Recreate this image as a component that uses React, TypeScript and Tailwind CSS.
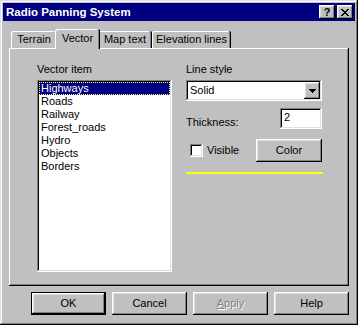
import React from "react";

const raised =
  "shadow-[inset_-1px_-1px_#000,inset_1px_1px_#fff,inset_-2px_-2px_#808080,inset_2px_2px_#dfdfdf]";
const sunken =
  "shadow-[inset_-1px_-1px_#fff,inset_1px_1px_#808080,inset_-2px_-2px_#dfdfdf,inset_2px_2px_#000]";

const items = ["Highways", "Roads", "Railway", "Forest_roads", "Hydro", "Objects", "Borders"];

const tabs = [
  { label: "Terrain", w: "w-[46px]" },
  { label: "Vector", w: "w-[45px]", active: true },
  { label: "Map text", w: "w-[54px]" },
  { label: "Elevation lines", w: "w-[79px]" },
];

function CloseGlyph() {
  return (
    <svg width="8" height="7" viewBox="0 0 8 7" shapeRendering="crispEdges">
      <rect x="0" y="0" width="2" height="1" />
      <rect x="6" y="0" width="2" height="1" />
      <rect x="1" y="1" width="2" height="1" />
      <rect x="5" y="1" width="2" height="1" />
      <rect x="2" y="2" width="4" height="1" />
      <rect x="3" y="3" width="2" height="1" />
      <rect x="2" y="4" width="4" height="1" />
      <rect x="1" y="5" width="2" height="1" />
      <rect x="5" y="5" width="2" height="1" />
      <rect x="0" y="6" width="2" height="1" />
      <rect x="6" y="6" width="2" height="1" />
    </svg>
  );
}

function DownArrow() {
  return (
    <svg width="7" height="4" viewBox="0 0 7 4" shapeRendering="crispEdges">
      <rect x="0" y="0" width="7" height="1" />
      <rect x="1" y="1" width="5" height="1" />
      <rect x="2" y="2" width="3" height="1" />
      <rect x="3" y="3" width="1" height="1" />
    </svg>
  );
}

function Button({ children, isDefault }: { children: React.ReactNode; isDefault?: boolean }) {
  return (
    <div
      className={`w-[75px] h-[23px] flex items-center justify-center bg-[#c0c0c0] ${raised} ${
        isDefault ? "border border-black" : ""
      }`}
    >
      {children}
    </div>
  );
}

export default function App() {
  return (
    <div
      className={`w-[358px] h-[325px] bg-[#c0c0c0] p-[3px] flex flex-col text-black text-[11px] leading-[13px] font-['Liberation_Sans',Arial,sans-serif] shadow-[inset_-1px_-1px_#000,inset_1px_1px_#dfdfdf,inset_-2px_-2px_#808080,inset_2px_2px_#fff]`}
    >
      {/* title bar */}
      <div className="h-[18px] bg-[#000080] flex items-center pl-[3px] pr-[2px]">
        <span className="text-white font-bold text-[11.5px]">Radio Panning System</span>
        <div className="ml-auto flex gap-[2px]">
          <div className={`w-[16px] h-[14px] bg-[#c0c0c0] flex items-center justify-center font-bold text-[11px] leading-[14px] ${raised}`}>
            ?
          </div>
          <div className={`w-[16px] h-[14px] bg-[#c0c0c0] flex items-center justify-center ${raised}`}>
            <CloseGlyph />
          </div>
        </div>
      </div>

      {/* tab control */}
      <div className="mt-[8px] ml-[6px] w-[340px]">
        <div className="h-[19px] flex items-end pl-[2px]">
          {tabs.map((t) =>
            t.active ? (
              <div
                key={t.label}
                className={`${t.w} h-[20px] -mx-[2px] -mb-[1px] relative z-10 bg-[#c0c0c0] rounded-t-[2px] flex items-center justify-center pb-[1px] shadow-[inset_-1px_0_#000,inset_1px_1px_#fff,inset_-2px_0_#808080]`}
              >
                {t.label}
              </div>
            ) : (
              <div
                key={t.label}
                className={`${t.w} h-[17px] bg-[#c0c0c0] rounded-t-[2px] flex items-center justify-center shadow-[inset_-1px_0_#000,inset_1px_1px_#fff,inset_-2px_0_#808080]`}
              >
                {t.label}
              </div>
            )
          )}
        </div>
        <div className="h-[238px] flex gap-[14px] pt-[15px] pl-[28px] shadow-[inset_-1px_-1px_#000,inset_1px_1px_#fff,inset_-2px_-2px_#808080]">
          {/* left column */}
          <div className="w-[135px] flex flex-col">
            <div className="h-[13px]">Vector item</div>
            <div className={`mt-[4px] h-[192px] bg-white p-[2px] ${sunken}`}>
              {items.map((it, i) => (
                <div
                  key={it}
                  className={`h-[13px] pl-[2px] ${
                    i === 0
                      ? "bg-[#000080] text-white outline-1 outline-dotted outline-[#ffff80] -outline-offset-1"
                      : ""
                  }`}
                >
                  {it}
                </div>
              ))}
            </div>
          </div>

          {/* right column */}
          <div className="w-[136px] flex flex-col">
            <div className="h-[13px]">Line style</div>
            <div className={`mt-[4px] h-[21px] bg-white flex items-center p-[2px] ${sunken}`}>
              <span className="pl-[2px]">Solid</span>
              <div className={`ml-auto w-[16px] h-[17px] bg-[#c0c0c0] flex items-center justify-center ${raised}`}>
                <DownArrow />
              </div>
            </div>
            <div className="mt-[7px] flex items-end justify-between">
              <span>Thickness:</span>
              <div className={`w-[42px] h-[21px] bg-white pl-[4px] pt-[3px] ${sunken}`}>2</div>
            </div>
            <div className="mt-[10px] h-[23px] flex items-center">
              <div className={`ml-[4px] w-[13px] h-[13px] bg-white ${sunken}`} />
              <span className="ml-[4px]">Visible</span>
              <div className={`ml-auto w-[66px] h-[23px] flex items-center justify-center ${raised}`}>
                Color
              </div>
            </div>
            <div className="mt-[10px] h-[2px] w-[137px] bg-[#ffff00]" />
          </div>
        </div>
      </div>

      {/* buttons */}
      <div className="mt-[6px] ml-[28px] flex gap-[6px]">
        <Button isDefault>OK</Button>
        <Button>Cancel</Button>
        <Button>
          <span className="text-[#808080] [text-shadow:1px_1px_0_#fff]">
            <span className="underline">A</span>pply
          </span>
        </Button>
        <Button>Help</Button>
      </div>
    </div>
  );
}
